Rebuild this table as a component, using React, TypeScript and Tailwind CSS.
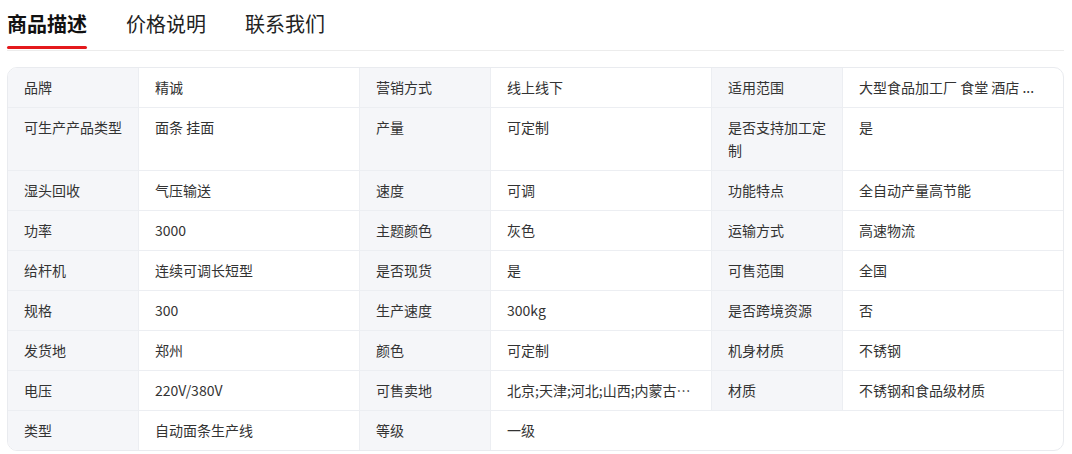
const rows: [string, string, string, string, string?, string?][] = [
  ["品牌", "精诚", "营销方式", "线上线下", "适用范围", "大型食品加工厂 食堂 酒店 ..."],
  ["可生产产品类型", "面条 挂面", "产量", "可定制", "是否支持加工定制", "是"],
  ["湿头回收", "气压输送", "速度", "可调", "功能特点", "全自动产量高节能"],
  ["功率", "3000", "主题颜色", "灰色", "运输方式", "高速物流"],
  ["给杆机", "连续可调长短型", "是否现货", "是", "可售范围", "全国"],
  ["规格", "300", "生产速度", "300kg", "是否跨境资源", "否"],
  ["发货地", "郑州", "颜色", "可定制", "机身材质", "不锈钢"],
  ["电压", "220V/380V", "可售卖地", "北京;天津;河北;山西;内蒙古…", "材质", "不锈钢和食品级材质"],
  ["类型", "自动面条生产线", "等级", "一级"],
];

const tabs = ["商品描述", "价格说明", "联系我们"];

export default function App() {
  return (
    <div
      className="w-[1072px] h-[454px] bg-white pl-[7px] pr-[8px] text-[#333]"
      style={{ fontFamily: '"Noto Sans CJK SC", "Noto Sans", sans-serif' }}
    >
      {/* tabs */}
      <div className="flex h-[51px] gap-[39px] border-b border-[#ececec]">
        {tabs.map((t, i) => (
          <div key={t} className="relative flex items-start pt-[10px]">
            <span
              className={
                i === 0
                  ? "text-[20px] leading-[28px] font-bold text-[#111]"
                  : "text-[20px] leading-[28px] text-[#222]"
              }
            >
              {t}
            </span>
            {i === 0 && (
              <div className="absolute left-0 right-0 top-[46px] h-[3px] rounded-full bg-[#e4191c]" />
            )}
          </div>
        ))}
      </div>

      {/* spec table */}
      <div className="mt-[16px] rounded-[10px] border border-[#e9ebef] overflow-hidden">
        <div className="grid grid-cols-[131px_221px_131px_221px_131px_1fr] text-[14px] leading-[23px]">
          {rows.map((r, ri) => {
            const last = ri === rows.length - 1;
            const bb = last ? "" : " border-b";
            return [
              <div key={ri + "a"} className={"bg-[#f5f6f9] px-4 py-[8px] border-r border-[#eceef2]" + bb}>
                {r[0]}
              </div>,
              <div key={ri + "b"} className={"px-4 py-[8px] border-r border-[#eceef2]" + bb}>
                {r[1]}
              </div>,
              <div key={ri + "c"} className={"bg-[#f5f6f9] px-4 py-[8px] border-r border-[#eceef2]" + bb}>
                {r[2]}
              </div>,
              r[4] === undefined ? (
                <div key={ri + "d"} className={"col-span-3 px-4 py-[8px] border-[#eceef2]" + bb}>
                  {r[3]}
                </div>
              ) : (
                <div key={ri + "d"} className={"px-4 py-[8px] border-r border-[#eceef2] truncate" + bb}>
                  {r[3]}
                </div>
              ),
              r[4] !== undefined && (
                <div key={ri + "e"} className={"bg-[#f5f6f9] px-4 py-[8px] border-r border-[#eceef2]" + bb}>
                  {r[4]}
                </div>
              ),
              r[4] !== undefined && (
                <div key={ri + "f"} className={"px-4 py-[8px] truncate border-[#eceef2]" + bb}>
                  {r[5]}
                </div>
              ),
            ];
          })}
        </div>
      </div>
    </div>
  );
}
